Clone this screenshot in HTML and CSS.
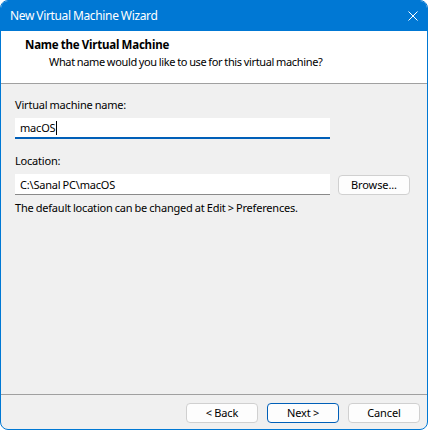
FILE: index.html
```html
<!DOCTYPE html>
<html>
<head>
<meta charset="utf-8">
<link rel="stylesheet" href="styles.css">
</head>
<body>
<div class="window">
  <div class="titlebar">
    <span class="title">New Virtual Machine Wizard</span>
    <svg class="close" width="10" height="10" viewBox="0 0 10 10"><path d="M0.5 0.5L9.5 9.5M9.5 0.5L0.5 9.5" stroke="#fff" stroke-width="1" fill="none"/></svg>
  </div>
  <div class="header">
    <div class="h-title">Name the Virtual Machine</div>
    <div class="h-sub">What name would you like to use for this virtual machine?</div>
  </div>
  <div class="content">
    <div class="label">Virtual machine name:</div>
    <div class="input active"><span>macOS</span><span class="caret"></span></div>
    <div class="label loc">Location:</div>
    <div class="row">
      <div class="input"><span>C:\Sanal PC\macOS</span></div>
      <div class="btn browse">Browse...</div>
    </div>
    <div class="note">The default location can be changed at Edit &gt; Preferences.</div>
  </div>
  <div class="footer">
    <div class="btn">&lt; Back</div>
    <div class="btn primary">Next &gt;</div>
    <div class="btn">Cancel</div>
  </div>
</div>
</body>
</html>
```
FILE: styles.css
```css
* { box-sizing: border-box; }
html, body { margin: 0; padding: 0; background: #fff; }
body {
  font-family: "Noto Sans", "Open Sans", sans-serif;
  font-size: 12px;
  letter-spacing: -0.35px;
  word-spacing: -0.5px;
  color: #000;
}
.window {
  width: 428px;
  height: 430px;
  border: 1px solid #0078d4;
  border-radius: 8px;
  overflow: hidden;
  background: #f0f0f0;
  display: flex;
  flex-direction: column;
}
.titlebar {
  flex: none;
  background: #0078d4;
  color: #fff;
  display: flex;
  align-items: center;
  justify-content: space-between;
  padding: 0 9px 0 9px;
  margin-top: -1px;
  height: 31px;
}
.title { font-size: 12px; line-height: 16px; }
.header {
  height: 53px;
  flex: none;
  background: #fff;
  border-bottom: 1px solid #a0a0a0;
  padding: 6px 0 0 24px;
}
.h-title { font-weight: bold; line-height: 16px; font-size: 11.5px; letter-spacing: -0.2px; }
.h-sub { padding-left: 24px; line-height: 18px; font-size: 11px; }
.content {
  flex: 1;
  padding: 13px 0 0 14px;
  font-size: 11px;
  letter-spacing: -0.2px;
}
.label { line-height: 16px; }
.label.loc { margin-top: 14px; }
.input {
  width: 315px;
  height: 21px;
  margin-top: 5px;
  background: #fff;
  border-bottom: 1px solid #8a8a8a;
  padding: 0 5px;
  display: flex;
  align-items: center;
}
.input.active { border-bottom: 2px solid #005fb8; }
.caret { width: 1px; height: 14px; background: #000; margin-left: 1px; }
.row { display: flex; align-items: flex-start; }
.btn {
  width: 72px;
  height: 20px;
  border: 1px solid #d0d0d0;
  border-radius: 4px;
  background: #fdfdfd;
  display: flex;
  align-items: center;
  justify-content: center;
  line-height: 16px;
  font-size: 11px;
  letter-spacing: -0.1px;
}
.browse { margin-left: 8px; margin-top: 6px; }
.note { margin-top: 5px; line-height: 16px; }
.footer {
  flex: none;
  height: 35px;
  border-top: 1px solid #a0a0a0;
  padding: 8px 7px 0 0;
  display: flex;
  justify-content: flex-end;
  gap: 9px;
}
.btn.primary { border-color: #005fb8; }
```
